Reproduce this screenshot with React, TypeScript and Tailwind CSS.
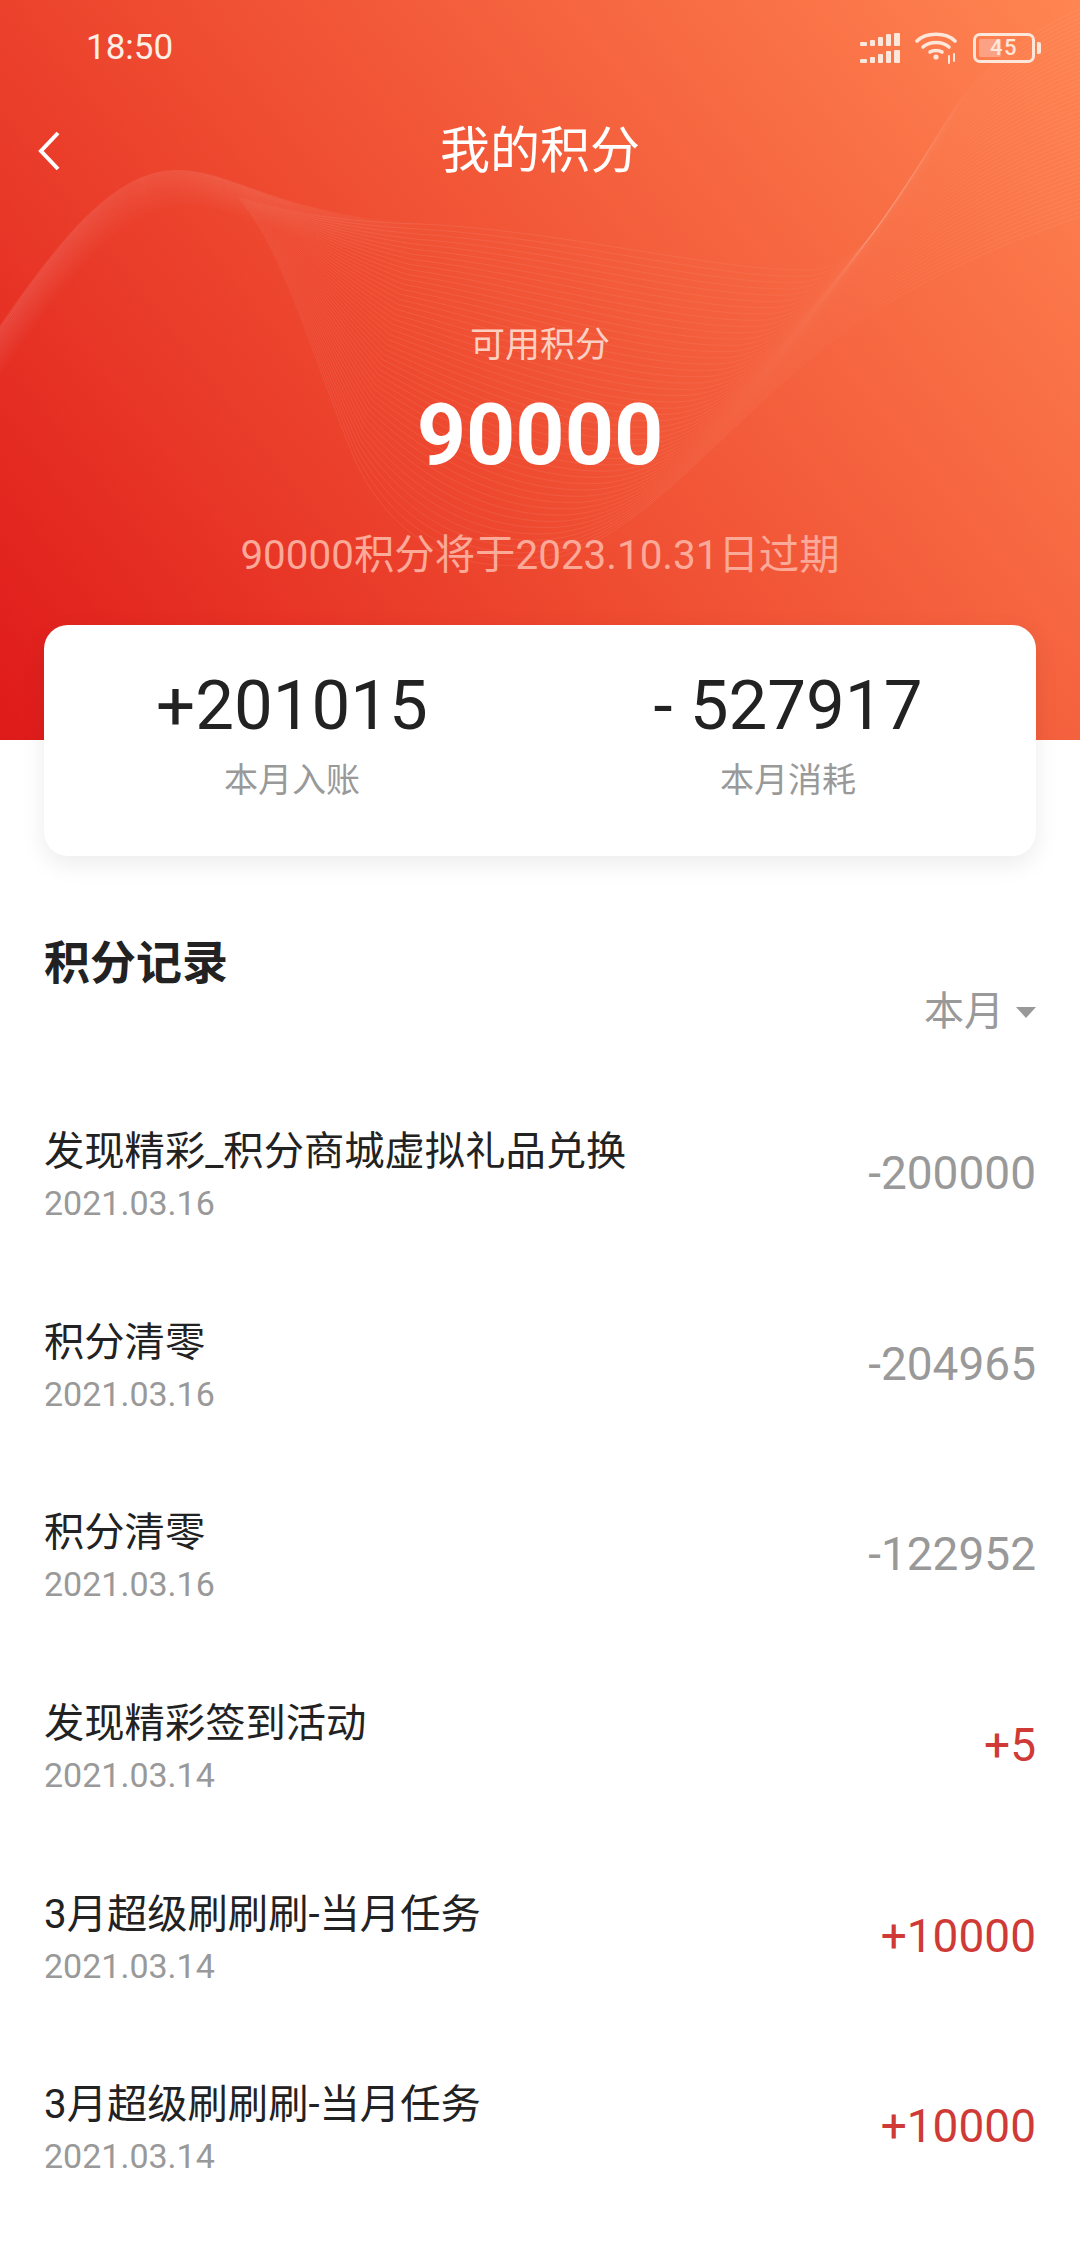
import React from 'react';

type Pt = [number, number];

// wave art: lines are interpolated between an upper and a lower edge curve
const upperEdge: Pt[] = [
  [235, 195], [280, 212], [340, 222], [420, 224],
  [560, 230], [720, 272], [810, 270],
  [870, 268], [900, 190], [960, 100],
  [990, 60], [1040, 25], [1090, 5],
];
const lowerEdge: Pt[] = [
  [235, 195], [280, 240], [310, 350], [355, 460],
  [385, 525], [440, 570], [520, 565],
  [640, 555], [720, 420], [860, 320],
  [930, 275], [1010, 240], [1090, 213],
];

function wavePath(t: number) {
  const p = upperEdge.map((u, i): Pt => [
    u[0] + (lowerEdge[i][0] - u[0]) * t,
    u[1] + (lowerEdge[i][1] - u[1]) * t,
  ]);
  const f = (q: Pt) => `${q[0].toFixed(1)} ${q[1].toFixed(1)}`;
  let d = `M${f(p[0])}`;
  for (let i = 1; i < p.length; i += 3) {
    d += ` C${f(p[i])} ${f(p[i + 1])} ${f(p[i + 2])}`;
  }
  return d;
}

const waveLines = Array.from({ length: 48 }, (_, i) => wavePath(i / 47));
// soft band that runs over the left hump
const bandPath = 'M-10 342 C60 238 115 171 176 171 C215 171 245 190 300 205 C350 218 380 222 420 224';
const bandSteps = Array.from({ length: 18 }, (_, i) => i);

const records = [
  { title: '发现精彩_积分商城虚拟礼品兑换', date: '2021.03.16', amount: '-200000', plus: false },
  { title: '积分清零', date: '2021.03.16', amount: '-204965', plus: false },
  { title: '积分清零', date: '2021.03.16', amount: '-122952', plus: false },
  { title: '发现精彩签到活动', date: '2021.03.14', amount: '+5', plus: true },
  { title: '3月超级刷刷刷-当月任务', date: '2021.03.14', amount: '+10000', plus: true },
  { title: '3月超级刷刷刷-当月任务', date: '2021.03.14', amount: '+10000', plus: true },
];

function SignalIcon() {
  return (
    <svg width="40" height="30" viewBox="0 0 40 30" fill="#fde6da">
      <rect x="0" y="9" width="7" height="4" rx="1" />
      <rect x="10" y="7" width="5" height="6" rx="1" />
      <rect x="18" y="4" width="5" height="9" rx="1" />
      <rect x="26" y="1" width="5" height="12" rx="1" />
      <rect x="34" y="0" width="6" height="13" rx="1" />
      <rect x="0" y="26" width="7" height="4" rx="1" />
      <rect x="10" y="24" width="5" height="6" rx="1" />
      <rect x="18" y="21" width="5" height="9" rx="1" />
      <rect x="26" y="18" width="5" height="12" rx="1" />
      <rect x="34" y="17" width="6" height="13" rx="1" />
    </svg>
  );
}

function WifiIcon() {
  return (
    <svg width="43" height="32" viewBox="0 0 43 32" fill="none" stroke="#fde6da" strokeWidth="3.6" strokeLinecap="round">
      <path d="M2 9C11 0 31 0 40 9" />
      <path d="M8 15C15 9 27 9 34 15" />
      <path d="M15 20C18 18 24 18 27 20" />
      <circle cx="21" cy="25" r="2.6" fill="#fde6da" stroke="none" />
      <path d="M34 24V31M39 22V29" strokeWidth="2" />
    </svg>
  );
}

function BatteryIcon() {
  return (
    <div className="flex items-center gap-[2px]">
      <div className="relative flex h-[30px] w-[62px] items-center justify-center rounded-[7px] border-[3px] border-[#fde6da]">
        <div className="absolute left-[3px] top-[3px] h-[18px] w-[22px] rounded-[2px] bg-[#fba184]" />
        <span className="relative text-[22px] font-medium leading-none tracking-[1.5px] text-[#fde6da]">45</span>
      </div>
      <div className="h-[12px] w-[4px] rounded-r-[2px] bg-[#fde6da]" />
    </div>
  );
}

function SummaryCell({ value, label }: { value: string; label: string }) {
  return (
    <div className="flex w-1/2 flex-col items-center">
      <div className="text-[69px] leading-[80px] text-[#222222]">{value}</div>
      <div className="mt-[12px] text-[34px] leading-[44px] text-[#999999]">{label}</div>
    </div>
  );
}

export default function App() {
  return (
    <div
      className="min-h-[2248px] w-[1080px] overflow-hidden bg-white"
      style={{ fontFamily: 'Roboto, "Noto Sans CJK SC", sans-serif' }}
    >
      {/* Header */}
      <div className="relative h-[740px] bg-[linear-gradient(52deg,#df1a1a_0%,#ee4a30_42%,#ff8552_100%)]">
        <svg className="absolute inset-0" width="1080" height="740" viewBox="0 0 1080 740" fill="none">
          <defs>
            <linearGradient id="bandFade" gradientUnits="userSpaceOnUse" x1="0" y1="0" x2="430" y2="0">
              <stop offset="0" stopColor="#fff" stopOpacity="1" />
              <stop offset="0.55" stopColor="#fff" stopOpacity="1" />
              <stop offset="1" stopColor="#fff" stopOpacity="0" />
            </linearGradient>
            <linearGradient id="lineFade" gradientUnits="userSpaceOnUse" x1="235" y1="0" x2="1080" y2="0">
              <stop offset="0" stopColor="#fff" stopOpacity="0" />
              <stop offset="0.12" stopColor="#fff" stopOpacity="0.08" />
              <stop offset="0.5" stopColor="#fff" stopOpacity="0.07" />
              <stop offset="0.72" stopColor="#fff" stopOpacity="0.035" />
              <stop offset="1" stopColor="#fff" stopOpacity="0.07" />
            </linearGradient>
          </defs>
          {bandSteps.map((i) => (
            <path
              key={i}
              d={bandPath}
              stroke="url(#bandFade)"
              strokeOpacity={0.09 * (1 - i / 18)}
              strokeWidth="2.2"
              transform={`translate(${i * 0.6} ${i * 2})`}
            />
          ))}
          {waveLines.map((d, i) => (
            <path key={i} d={d} stroke="url(#lineFade)" strokeWidth="1" />
          ))}
        </svg>

        <div className="relative flex flex-col items-center">
          {/* Status bar */}
          <div className="flex h-[95px] w-full items-center justify-between pl-[86px] pr-[39px]">
            <span className="mt-[2px] text-[35px] text-[#fdeee6]">18:50</span>
            <div className="flex items-center gap-[15px]">
              <SignalIcon />
              <WifiIcon />
              <BatteryIcon />
            </div>
          </div>

          {/* Nav */}
          <div className="relative flex h-[112px] w-full items-center justify-center">
            <svg className="absolute left-[36px] top-[36px]" width="26" height="40" viewBox="0 0 26 40" fill="none" stroke="#ffffff" strokeWidth="4">
              <path d="M22 2L5 20L22 38" />
            </svg>
            <span className="text-[50px] text-white">我的积分</span>
          </div>

          <div className="mt-[114px] text-[35px] leading-[50px] text-[#fbd0c2]">可用积分</div>
          <div className="mt-[12px] text-[86px] font-bold leading-[104px] text-white">90000</div>
          <div className="mt-[41px] text-[40.4px] leading-[56px] text-[#fba999]">90000积分将于2023.10.31日过期</div>
        </div>
      </div>

      {/* Summary card */}
      <div className="relative z-10 mx-[44px] -mt-[115px] flex h-[231px] items-start rounded-[24px] bg-white pt-[41px] shadow-[0_8px_24px_rgba(0,0,0,0.08)]">
        <SummaryCell value="+201015" label="本月入账" />
        <SummaryCell value="- 527917" label="本月消耗" />
      </div>

      {/* Records */}
      <div className="px-[44px]">
        <div className="pt-[77px] text-[46px] font-bold leading-[60px] text-[#222222]">积分记录</div>
        <div className="-mt-[6px] flex items-center justify-end gap-[12px] text-[40px] leading-[50px] text-[#999999]">
          本月
          <svg width="20" height="12" viewBox="0 0 20 12" fill="#999999">
            <path d="M0 1H20L10 12Z" />
          </svg>
        </div>

        <div className="mt-[43px]">
          {records.map((r, i) => (
            <div key={i} className="flex h-[190.6px] items-center justify-between">
              <div>
                <div className="text-[40.3px] leading-[56px] text-[#222222]">{r.title}</div>
                <div className="text-[34px] leading-[46px] text-[#999999]">{r.date}</div>
              </div>
              <div className={`mb-[4px] text-[46px] leading-[60px] ${r.plus ? 'text-[#cf3a36]' : 'text-[#999999]'}`}>
                {r.amount}
              </div>
            </div>
          ))}
        </div>
      </div>
    </div>
  );
}
